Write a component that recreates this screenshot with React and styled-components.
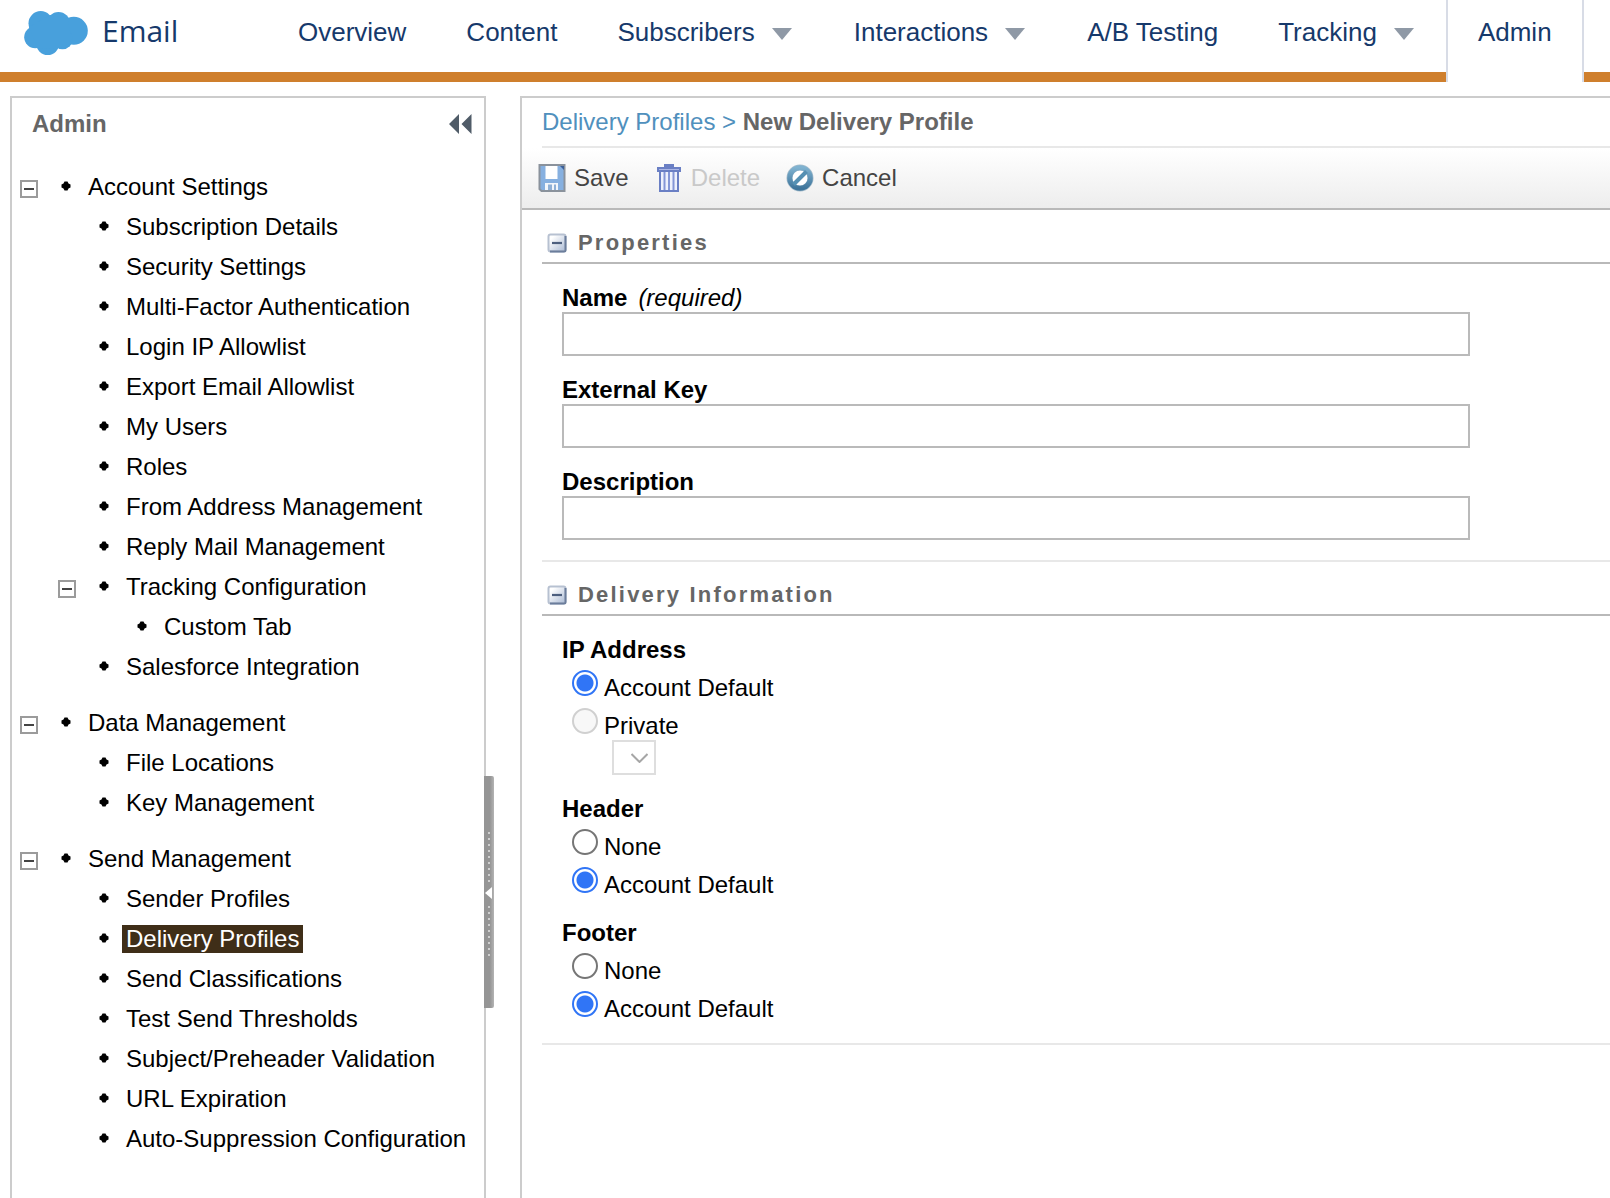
import React, { useState } from "react";
import styled, { createGlobalStyle } from "styled-components";

const GlobalStyle = createGlobalStyle`
  * { box-sizing: border-box; }
  body {
    margin: 0;
    background: #fff;
    color: #000;
    font: 24px/28px "Liberation Sans", Arial, sans-serif;
  }
  button, input, select { font: inherit; color: inherit; }
  a { text-decoration: none; }
  ul { list-style: none; margin: 0; padding: 0; }
`;

const Page = styled.div`
  display: flex;
  flex-direction: column;
  min-height: 100vh;
`;

/* ---------- top bar ---------- */

const TopBar = styled.header`
  display: flex;
  height: 82px;
  padding-left: 24px;
  box-shadow: inset 0 -10px #cf7f2d;
  color: #16396b;
  overflow: hidden;
`;

const Brand = styled.a`
  display: flex;
  flex: none;
  align-items: center;
  gap: 14px;
  width: 244px;
  height: 66px;
  color: inherit;
  font: 30px/64px "Open Sans", sans-serif;
`;

const BrandName = styled.span`
  padding-bottom: 4px;
`;

const Nav = styled.nav`
  display: flex;
  flex: none;
`;

const NavLink = styled.a`
  display: flex;
  padding: 0 30px;
  color: inherit;
  font-size: 26px;
  line-height: 64px;
  white-space: nowrap;
  ${(p) => p.$active && "background: #fff; border: solid #d8dce6; border-width: 0 2px;"}
`;

const Caret = styled.svg`
  width: 20px;
  height: 12px;
  margin: 28px 2px 0 17px;
  fill: #8f99a6;
`;

/* ---------- shell ---------- */

const Body = styled.div`
  display: flex;
  flex: 1;
  gap: 34px;
  padding: 14px 0 0 10px;
`;

const Sidebar = styled.aside`
  position: relative;
  flex: none;
  width: 476px;
  border: 2px solid #ccc;
  border-bottom: 0;
`;

const SidebarHead = styled.div`
  display: flex;
  align-items: center;
  justify-content: space-between;
  height: 52px;
  padding: 0 12px 0 20px;
  margin-bottom: 17px;
`;

const SidebarTitle = styled.h2`
  margin: 0;
  color: #666;
  font-size: 24px;
`;

const PlainButton = styled.button`
  display: flex;
  align-items: center;
  padding: 0;
  border: 0;
  background: none;
  cursor: pointer;
`;

const Splitter = styled.button`
  position: absolute;
  top: 678px;
  right: -10px;
  width: 10px;
  height: 232px;
  padding: 0;
  border: 0;
  border-radius: 0 2px 2px 0;
  background: linear-gradient(90deg, #959595 60%, #b4b4b4);
`;

/* ---------- tree ---------- */

const Tree = styled.ul`
  && { padding-left: 8px; }
  & > li + li { margin-top: 16px; }
`;

const Branch = styled.ul`
  && { padding-left: 38px; }
`;

const Row = styled.div`
  display: flex;
  align-items: center;
  height: 40px;
  white-space: nowrap;
`;

const ToggleSlot = styled.span`
  width: 18px;
  height: 18px;
  margin-right: 23px;
  margin-top: 4px;
`;

const Bullet = styled.svg`
  width: 10px;
  height: 10px;
  margin-right: 13px;
  margin-bottom: 2px;
  fill: #000;
`;

const TreeLink = styled.a`
  padding: 0 4px;
  color: ${(p) => (p.$current ? "#fff" : "#000")};
  background: ${(p) => (p.$current ? "#3f2e18" : "none")};
`;

/* ---------- main panel ---------- */

const Panel = styled.main`
  flex: 1;
  min-width: 0;
  border: solid #ccc;
  border-width: 2px 0 0 2px;
`;

const Crumbs = styled.nav`
  margin-left: 20px;
  padding: 10px 0;
  border-bottom: 2px solid #e8e8e8;
  color: #5090bd;
  a { color: inherit; }
  strong { color: #666; }
`;

const Toolbar = styled.div`
  display: flex;
  align-items: center;
  gap: 26px;
  height: 62px;
  padding: 0 16px;
  border-bottom: 2px solid #b9b9b9;
  background: linear-gradient(#fff, #ededed);
`;

const ToolButton = styled(PlainButton)`
  gap: 8px;
  color: #444;
  &:disabled { color: #c9c9c9; cursor: default; }
`;

const Section = styled.section`
  margin-left: 20px;
  border-bottom: 2px solid #e8e8e8;
`;

const SectionHead = styled.div`
  display: flex;
  align-items: center;
  gap: 11px;
  height: 54px;
  padding: 14px 0 0 5px;
  border-bottom: 2px solid #b9b9b9;
`;

const SectionTitle = styled.h3`
  margin: 0;
  color: #666;
  font-size: 22px;
  letter-spacing: 0.1em;
`;

const Fields = styled.div`
  display: flex;
  flex-direction: column;
  gap: 20px;
  padding: 20px;
`;

const FieldLabel = styled.label`
  display: flex;
  gap: 11px;
  font-weight: bold;
  em { font-weight: normal; }
`;

const TextInput = styled.input`
  display: block;
  width: 100%;
  max-width: 908px;
  height: 44px;
  padding: 0 8px;
  border: 2px solid #bababa;
  border-radius: 0;
  background: #fff;
`;

const Group = styled.fieldset`
  min-width: 0;
  margin: 0;
  padding: 0;
  border: 0;
`;

const Legend = styled.legend`
  padding: 0;
  font-weight: bold;
`;

const Choice = styled.div`
  display: flex;
  align-items: baseline;
  gap: 6px;
  height: 38px;
  padding: 6px 0 0 10px;
`;

const Radio = styled.input`
  appearance: none;
  flex: none;
  width: 26px;
  height: 26px;
  margin: 0;
  border: 2px solid #767676;
  border-radius: 50%;
  background: #fff;
  &:checked {
    border-color: #3075f6;
    background: radial-gradient(circle, #3075f6 8px, #fff 9px);
  }
  &:disabled { border-color: #d0d0d0; background: #f8f8f8; }
`;

const SelectBox = styled.div`
  display: grid;
  width: 44px;
  height: 35px;
  margin-left: 50px;
  & > * { grid-area: 1 / 1; }
  svg { z-index: 1; place-self: center end; margin-right: 8px; pointer-events: none; }
`;

const Select = styled.select`
  appearance: none;
  width: 100%;
  height: 100%;
  border: 2px solid #dedede;
  border-radius: 0;
  background: #fff;
  opacity: 1;
`;

/* ---------- drawings ---------- */

const Cloud = () => (
  <svg width="64" height="44" viewBox="0 0 64 44" fill="#48a0dc" aria-hidden="true">
    <circle cx="16.700" cy="12.300" r="12.200" />
    <circle cx="34.500" cy="12.500" r="11.500" />
    <circle cx="49.800" cy="19.800" r="14" />
    <circle cx="11.200" cy="26.300" r="11" />
    <circle cx="23.700" cy="32.500" r="11.500" />
    <circle cx="38.500" cy="28" r="10.300" />
    <path d="M5 16 26 4l18 4 4 24-13 5-21 .5z" />
  </svg>
);

const DoubleLeft = () => (
  <svg width="23" height="20" viewBox="0 0 23 20" fill="#505c68" aria-hidden="true">
    <path d="M0 10 10 0v20zM12.500 10 22.500 0v20z" />
  </svg>
);

const BoxMinus = () => (
  <svg width="18" height="18" viewBox="0 0 18 18" aria-hidden="true">
    <rect x="1" y="1" width="16" height="16" fill="#fff" stroke="#9b9b9b" strokeWidth="2" />
    <path d="M4 9h10" stroke="#444" strokeWidth="2" />
  </svg>
);

const SectionMinus = () => (
  <svg width="20" height="20" viewBox="0 0 20 20" aria-hidden="true">
    <defs>
      <linearGradient id="sectionFill" x1="0" y1="0" x2="1" y2="1">
        <stop offset="0.200" stopColor="#fff" />
        <stop offset="1" stopColor="#a9b9d3" />
      </linearGradient>
    </defs>
    <rect x="1.500" y="1.500" width="17" height="17" rx="2" fill="url(#sectionFill)" stroke="#b7c1d1" strokeWidth="2" />
    <path d="M18.500 3v14a1.500 1.500 0 0 1-1.500 1.500H3" fill="none" stroke="#6b7d9b" strokeWidth="2" />
    <path d="M5 10h10" stroke="#4d5f7e" strokeWidth="2.200" />
  </svg>
);

const SaveIcon = () => (
  <svg width="28" height="28" viewBox="0 0 28 28" aria-hidden="true">
    <path d="M1.500 1h25v26h-23l-2-2z" fill="#86b0e0" stroke="#8a929c" strokeWidth="2" />
    <path d="M7.500 2h12v13h-12z" fill="#fff" />
    <path d="M7 19h13v7H7z" fill="#f2f6fb" />
    <path d="M10 20.500h4V26h-4zM16 20.500h2V26h-2z" fill="#8fb0d6" />
    <path d="M22 2h4v4z" fill="#3c5f98" />
  </svg>
);

const TrashIcon = () => (
  <svg width="28" height="28" viewBox="0 0 28 28" fill="none" stroke="#6a7fc4" strokeWidth="2" aria-hidden="true">
    <path d="M5 7h18v20H5z" fill="#eef1fc" />
    <path d="M9.500 8v18M14 8v18M18.500 8v18" stroke="#8496d6" />
    <path d="M3 4h22v3H3z" fill="#aab6e6" />
    <path d="M9 1.500h10" strokeWidth="3" />
  </svg>
);

const CancelIcon = () => (
  <svg width="28" height="28" viewBox="0 0 28 28" fill="none" aria-hidden="true">
    <defs>
      <linearGradient id="ringFill" x1="0" y1="0" x2="0" y2="1">
        <stop offset="0" stopColor="#7fb2d0" />
        <stop offset="1" stopColor="#3f759b" />
      </linearGradient>
    </defs>
    <circle cx="14" cy="14" r="10.500" fill="#fff" stroke="#a5bccb" strokeWidth="6" />
    <circle cx="14" cy="14" r="10.300" stroke="url(#ringFill)" strokeWidth="5" />
    <path d="M7.500 20.500 20.500 7.500" stroke="#5590b3" strokeWidth="4" />
  </svg>
);

const Grip = () => (
  <svg width="10" height="232" viewBox="0 0 10 232" fill="none" stroke="#d0d0d0" aria-hidden="true">
    <path d="M5 56v52M5 130v52" strokeWidth="2" strokeDasharray="2 4" />
    <path d="M1 117 8 111v12z" fill="#fff" stroke="none" />
  </svg>
);

/* ---------- data ---------- */

const NAV = [
  { label: "Overview" },
  { label: "Content" },
  { label: "Subscribers", menu: true },
  { label: "Interactions", menu: true },
  { label: "A/B Testing" },
  { label: "Tracking", menu: true },
  { label: "Admin", active: true },
];

const TREE = [
  {
    label: "Account Settings",
    items: [
      { label: "Subscription Details" },
      { label: "Security Settings" },
      { label: "Multi-Factor Authentication" },
      { label: "Login IP Allowlist" },
      { label: "Export Email Allowlist" },
      { label: "My Users" },
      { label: "Roles" },
      { label: "From Address Management" },
      { label: "Reply Mail Management" },
      { label: "Tracking Configuration", items: [{ label: "Custom Tab" }] },
      { label: "Salesforce Integration" },
    ],
  },
  { label: "Data Management", items: [{ label: "File Locations" }, { label: "Key Management" }] },
  {
    label: "Send Management",
    items: [
      { label: "Sender Profiles" },
      { label: "Delivery Profiles", current: true },
      { label: "Send Classifications" },
      { label: "Test Send Thresholds" },
      { label: "Subject/Preheader Validation" },
      { label: "URL Expiration" },
      { label: "Auto-Suppression Configuration" },
    ],
  },
];

/* ---------- parts ---------- */

function TreeNode({ node }) {
  const [open, setOpen] = useState(true);
  return (
    <li>
      <Row>
        <ToggleSlot>
          {node.items && (
            <PlainButton type="button" aria-expanded={open} aria-label={node.label} onClick={() => setOpen(!open)}>
              <BoxMinus />
            </PlainButton>
          )}
        </ToggleSlot>
        <Bullet viewBox="0 0 10 10" aria-hidden="true">
          <path d="M3.500 .5h3L7.500 2.500 9.500 3.500v3L7.500 7.500 6.500 9.500h-3L2.500 7.500.5 6.500v-3L2.500 2.500z" />
        </Bullet>
        <TreeLink href="#" $current={node.current} aria-current={node.current ? "page" : undefined}>
          {node.label}
        </TreeLink>
      </Row>
      {node.items && open && (
        <Branch>
          {node.items.map((n) => (
            <TreeNode key={n.label} node={n} />
          ))}
        </Branch>
      )}
    </li>
  );
}

function Field({ id, label, note }) {
  return (
    <div>
      <FieldLabel htmlFor={id}>
        {label}
        {note && <em>{note}</em>}
      </FieldLabel>
      <TextInput id={id} type="text" required={Boolean(note)} />
    </div>
  );
}

function RadioGroup({ name, legend, options, initial, children }) {
  const [value, setValue] = useState(initial);
  return (
    <Group>
      <Legend>{legend}</Legend>
      {options.map((o) => (
        <Choice key={o.label}>
          <Radio
            type="radio"
            id={`${name}-${o.label}`}
            name={name}
            disabled={o.disabled}
            checked={value === o.label}
            onChange={() => setValue(o.label)}
          />
          <label htmlFor={`${name}-${o.label}`}>{o.label}</label>
        </Choice>
      ))}
      {children}
    </Group>
  );
}

function FormSection({ title, children }) {
  const [open, setOpen] = useState(true);
  return (
    <Section>
      <SectionHead>
        <PlainButton type="button" aria-expanded={open} aria-label={title} onClick={() => setOpen(!open)}>
          <SectionMinus />
        </PlainButton>
        <SectionTitle>{title}</SectionTitle>
      </SectionHead>
      {open && <Fields>{children}</Fields>}
    </Section>
  );
}

export default function App() {
  return (
    <Page>
      <GlobalStyle />
      <TopBar>
        <Brand href="#">
          <Cloud />
          <BrandName>Email</BrandName>
        </Brand>
        <Nav>
          {NAV.map((n) => (
            <NavLink key={n.label} href="#" $active={n.active}>
              {n.label}
              {n.menu && (
                <Caret viewBox="0 0 20 12" aria-hidden="true">
                  <path d="M0 0h20L10 12z" />
                </Caret>
              )}
            </NavLink>
          ))}
        </Nav>
      </TopBar>

      <Body>
        <Sidebar>
          <SidebarHead>
            <SidebarTitle>Admin</SidebarTitle>
            <PlainButton type="button" aria-label="Collapse">
              <DoubleLeft />
            </PlainButton>
          </SidebarHead>
          <Tree>
            {TREE.map((n) => (
              <TreeNode key={n.label} node={n} />
            ))}
          </Tree>
          <Splitter type="button" aria-label="Hide panel">
            <Grip />
          </Splitter>
        </Sidebar>

        <Panel>
          <Crumbs>
            <a href="#">Delivery Profiles</a> &gt; <strong>New Delivery Profile</strong>
          </Crumbs>
          <Toolbar>
            <ToolButton type="button">
              <SaveIcon />
              Save
            </ToolButton>
            <ToolButton type="button" disabled>
              <TrashIcon />
              Delete
            </ToolButton>
            <ToolButton type="button">
              <CancelIcon />
              Cancel
            </ToolButton>
          </Toolbar>

          <FormSection title="Properties">
            <Field id="name" label="Name" note="(required)" />
            <Field id="external-key" label="External Key" />
            <Field id="description" label="Description" />
          </FormSection>

          <FormSection title="Delivery Information">
            <RadioGroup
              name="ip"
              legend="IP Address"
              initial="Account Default"
              options={[{ label: "Account Default" }, { label: "Private", disabled: true }]}
            >
              <SelectBox>
                <Select disabled aria-label="Private IP address" />
                <svg width="17" height="10" viewBox="0 0 17 10" fill="none" stroke="#a6a6a6" strokeWidth="2" aria-hidden="true">
                  <path d="M.5 1l8 8 8-8" />
                </svg>
              </SelectBox>
            </RadioGroup>
            <RadioGroup
              name="header"
              legend="Header"
              initial="Account Default"
              options={[{ label: "None" }, { label: "Account Default" }]}
            />
            <RadioGroup
              name="footer"
              legend="Footer"
              initial="Account Default"
              options={[{ label: "None" }, { label: "Account Default" }]}
            />
          </FormSection>
        </Panel>
      </Body>
    </Page>
  );
}
